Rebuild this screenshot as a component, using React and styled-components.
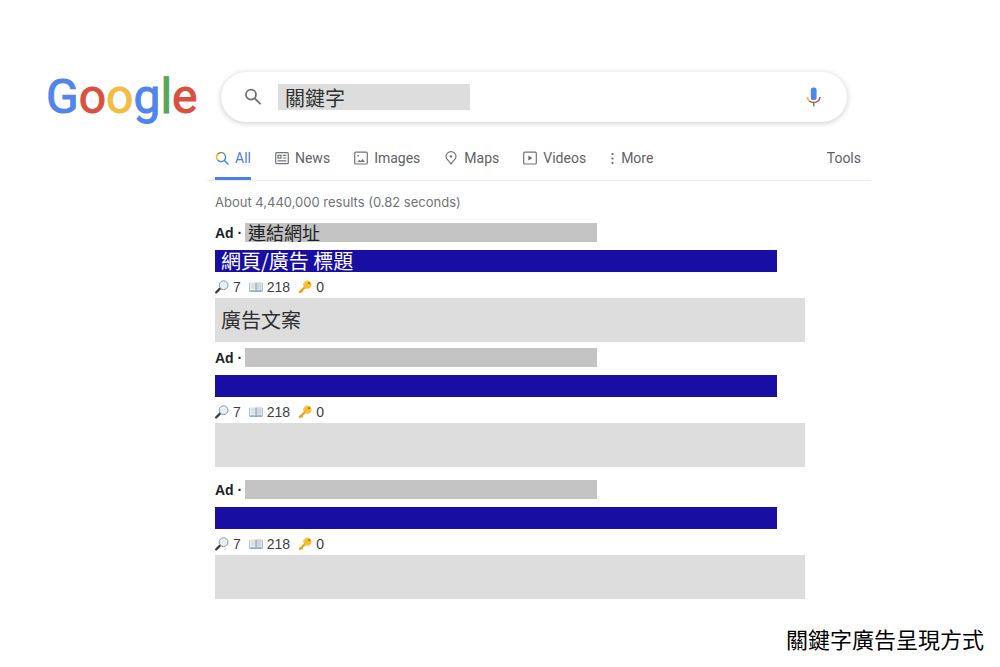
import React from "react";
import styled, { createGlobalStyle } from "styled-components";
import { useState } from "react";

const tabs = [
  { name: "All", icon: "all", active: true },
  { name: "News", icon: "news" },
  { name: "Images", icon: "images" },
  { name: "Maps", icon: "maps" },
  { name: "Videos", icon: "videos" },
  { name: "More", icon: "more" },
];

const ads = [
  { id: 1, link: "連結網址", title: "網頁/廣告 標題", text: "廣告文案" },
  { id: 2, gap: "6px" },
  { id: 3, gap: "13px" },
];

const TabIcon = ({ name }) => {
  if (name === "more") {
    return (
      <svg width="5" height="14" viewBox="0 0 5 14" fill="#5f6368">
        <circle cx="2.5" cy="3" r="1.1" />
        <circle cx="2.5" cy="7.5" r="1.1" />
        <circle cx="2.5" cy="12" r="1.1" />
      </svg>
    );
  }
  return (
    <svg width="14" height="14" viewBox="0 0 14 14" fill="none" stroke="#70757a" strokeWidth="1.2">
      {name === "all" && (
        <g strokeWidth="1.4">
          <path d="M2.4 8.6A4.4 4.4 0 0 1 2.6 3.2" stroke="#fbbc04" />
          <path d="M2.6 3.2A4.4 4.4 0 0 1 6.1 1.6" stroke="#ea4335" />
          <path d="M6.1 1.6A4.4 4.4 0 0 1 10.5 6" stroke="#34a853" />
          <path d="M10.5 6A4.4 4.4 0 0 1 2.4 8.6M9.2 9.2L13.4 13.4" stroke="#4285f4" />
        </g>
      )}
      {name === "news" && (
        <>
          <rect x="0.7" y="1.7" width="12.6" height="11" rx="1" />
          <rect x="3" y="4.3" width="3" height="2.8" />
          <path d="M7.8 4.4H11.4M7.8 7H11.4M2.6 9.9H11.4" />
        </>
      )}
      {name === "images" && (
        <>
          <rect x="0.7" y="1.2" width="12.6" height="11.8" rx="1" />
          <circle cx="4.2" cy="4.6" r="0.9" fill="#70757a" stroke="none" />
          <path d="M3.4 11L5.4 8.7L6.8 10.1L8.6 7.9L11 11Z" fill="#70757a" stroke="none" />
        </>
      )}
      {name === "maps" && (
        <>
          <path d="M7 13.3C6.4 10.6 2 9 2 5.4a5 4.7 0 0 1 10 0C12 9 7.6 10.6 7 13.3Z" />
          <circle cx="7" cy="5.4" r="1.2" fill="#70757a" stroke="none" />
        </>
      )}
      {name === "videos" && (
        <>
          <rect x="0.7" y="1.2" width="12.6" height="11.8" rx="1" />
          <path d="M5.4 4.7V9.6L9.3 7.1Z" fill="#5f6368" stroke="none" />
        </>
      )}
    </svg>
  );
};

const SearchIcon = () => (
  <svg width="18" height="18" viewBox="0 0 18 18" fill="none" stroke="#6b7075" strokeWidth="1.8">
    <circle cx="7" cy="6.6" r="5" />
    <path d="M10.7 10.3L16.6 16.2" />
  </svg>
);

const MicIcon = () => (
  <svg width="16" height="20" viewBox="0 0 16 20" fill="none" strokeWidth="1.6">
    <rect x="4.8" y="0.4" width="5.8" height="12.6" rx="2.6" fill="#4f86ec" />
    <path d="M1.4 10C1.6 11.8 2.2 13 3.3 14" stroke="#f2b632" />
    <path d="M3.3 14C5.6 16 9.8 16 12.1 14C13.2 13 13.8 11.8 14 10" stroke="#df4a3c" />
    <path d="M7.7 15.6V19.4" stroke="#3f9d55" />
  </svg>
);

const LensIcon = () => (
  <svg width="14" height="14" viewBox="0 0 14 14">
    <path d="M5.2 8.4L1.2 12.4" stroke="#3b3f44" strokeWidth="2.2" strokeLinecap="round" />
    <circle cx="8.6" cy="5.2" r="4.4" fill="#e3f0f7" stroke="#8d979e" strokeWidth="1" />
    <path d="M6.4 4.4A2.6 2.6 0 0 1 8.8 2.6" fill="none" stroke="#fff" />
  </svg>
);

const BookIcon = () => (
  <svg width="14" height="14" viewBox="0 0 14 14">
    <path d="M0.4 2.8H13.6V11.8H0.4Z" fill="#7ba3bd" />
    <path d="M1 2.2C3 1.6 5.6 1.8 7 2.8V11C5.6 10.2 3 10.2 1 10.8Z" fill="#eef1f3" />
    <path d="M13 2.2C11 1.6 8.4 1.8 7 2.8V11C8.4 10.2 11 10.2 13 10.8Z" fill="#dce2e6" />
    <path d="M2.2 4H5.8M2.2 6H5.8M2.2 8H5.8M8.2 4H11.8M8.2 6H11.8M8.2 8H11.8" stroke="#b4bec5" strokeWidth="0.7" />
    <path d="M7 2.8V11.6" stroke="#72818b" strokeWidth="0.9" />
  </svg>
);

const KeyIcon = () => (
  <svg width="14" height="14" viewBox="0 0 14 14">
    <path d="M7.6 6.6L1.2 12.6M3.2 10.7L4.6 12" stroke="#e5a51c" strokeWidth="2.2" />
    <circle cx="9.4" cy="4.6" r="4.2" fill="#f5bf2f" />
    <path d="M6.2 3.8A3.4 3.4 0 0 1 9.4 1.2" fill="none" stroke="#fbdc74" />
    <circle cx="11" cy="3.2" r="0.9" fill="#8f651a" />
  </svg>
);

const Ad = ({ ad }) => (
  <StyledAd $gap={ad.gap}>
    <AdRow>
      <AdLabel>Ad ·</AdLabel>
      <AdLink>{ad.link}</AdLink>
    </AdRow>
    <AdTitle href="#">{ad.title}</AdTitle>
    <Stats>
      <Stat><LensIcon />7</Stat>
      <Stat><BookIcon />218</Stat>
      <Stat><KeyIcon />0</Stat>
    </Stats>
    <AdText>{ad.text}</AdText>
  </StyledAd>
);

const App = () => {
  const [keyword, setKeyword] = useState("關鍵字");

  return (
    <Page>
      <GlobalStyle />
      <Header>
        <Logo href="#" aria-label="Google">
          <Letter $color="#5086ec">G</Letter>
          <Letter $color="#d95040">o</Letter>
          <Letter $color="#f2bd42">o</Letter>
          <Letter $color="#5086ec">g</Letter>
          <Letter $color="#58a55c">l</Letter>
          <Letter $color="#d95040">e</Letter>
        </Logo>
        <SearchBar onSubmit={(e) => e.preventDefault()}>
          <IconButton type="submit" aria-label="Search">
            <SearchIcon />
          </IconButton>
          <SearchInput
            type="text"
            aria-label="Keyword"
            value={keyword}
            onChange={(e) => setKeyword(e.target.value)}
          />
          <IconButton type="button" aria-label="Voice" $end>
            <MicIcon />
          </IconButton>
        </SearchBar>
      </Header>

      <TabBar>
        {tabs.map((tab) => (
          <Tab key={tab.name} href="#" $active={tab.active}>
            <TabIcon name={tab.icon} />
            {tab.name}
          </Tab>
        ))}
        <ToolsButton type="button">Tools</ToolsButton>
      </TabBar>

      <Results>
        <ResultCount>About 4,440,000 results (0.82 seconds)</ResultCount>
        {ads.map((ad) => (
          <Ad key={ad.id} ad={ad} />
        ))}
      </Results>

      <Caption>關鍵字廣告呈現方式</Caption>
    </Page>
  );
};

const GlobalStyle = createGlobalStyle`
  * {
    box-sizing: border-box;
  }
  body {
    margin: 0;
    background: #ffffff;
    font-family: "Liberation Sans", "Noto Sans CJK TC", sans-serif;
    color: #202124;
  }
  svg {
    display: block;
    flex-shrink: 0;
  }
`;

const Page = styled.div`
  padding-top: 72px;
`;

const Header = styled.header`
  display: grid;
  grid-template-columns: 175px minmax(0, 626px);
  padding: 0 46px;
`;

const Logo = styled.a`
  display: flex;
  font-family: Roboto, sans-serif;
  font-size: 48px;
  line-height: 50px;
  text-decoration: none;
`;

const Letter = styled.span`
  color: ${(props) => props.$color};
  -webkit-text-stroke: 1px ${(props) => props.$color};
`;

const SearchBar = styled.form`
  display: flex;
  align-items: center;
  height: 50px;
  padding: 0 25px 0 23px;
  border-radius: 25px;
  box-shadow: 0 1px 5px 1px rgba(32, 33, 36, 0.18);
`;

const IconButton = styled.button`
  display: flex;
  padding: 0;
  border: none;
  background: none;
  cursor: pointer;
  margin-left: ${(props) => (props.$end ? "auto" : "0")};
`;

const SearchInput = styled.input`
  width: 192px;
  height: 26px;
  margin-left: 16px;
  padding: 0 7px;
  border: none;
  outline: none;
  background: #dddddd;
  color: #303030;
  font-family: "Noto Sans CJK TC", sans-serif;
  font-size: 20px;
`;

const TabBar = styled.nav`
  display: flex;
  gap: 24px;
  max-width: 664px;
  height: 45px;
  margin: 14px 0 0 207px;
  padding: 0 10px 0 8px;
  border-bottom: 1px solid #ebebeb;
`;

const Tab = styled.a`
  display: flex;
  align-items: center;
  gap: 6px;
  padding-top: 3px;
  border-bottom: 3px solid ${(props) => (props.$active ? "#4a80e8" : "transparent")};
  color: ${(props) => (props.$active ? "#4a80e8" : "#5f6368")};
  font-family: Roboto, sans-serif;
  font-size: 14px;
  text-decoration: none;
`;

const ToolsButton = styled.button`
  margin-left: auto;
  padding: 0;
  border: none;
  background: none;
  color: #5f6368;
  font-family: Roboto, sans-serif;
  font-size: 14px;
  cursor: pointer;
`;

const Results = styled.main`
  max-width: 805px;
  padding-left: 215px;
`;

const ResultCount = styled.p`
  margin: 0;
  padding: 13px 0;
  color: #70757a;
  font-family: Inter, sans-serif;
  font-size: 13px;
  line-height: 16px;
`;

const StyledAd = styled.section`
  margin-top: ${(props) => props.$gap || "0"};
`;

const AdRow = styled.div`
  display: flex;
  align-items: center;
`;

const AdLabel = styled.span`
  width: 30px;
  font-size: 14px;
  font-weight: bold;
  white-space: nowrap;
`;

const AdLink = styled.div`
  width: 352px;
  height: 19px;
  padding-left: 3px;
  background: #c3c3c3;
  font-size: 18px;
  line-height: 22px;
`;

const AdTitle = styled.a`
  display: block;
  width: 562px;
  max-width: 100%;
  height: 22px;
  margin-top: 8px;
  padding-left: 6px;
  background: #180ea4;
  color: #ffffff;
  font-family: "Noto Sans CJK TC", sans-serif;
  font-size: 20px;
  line-height: 22px;
  text-decoration: none;
`;

const Stats = styled.div`
  display: flex;
  gap: 8px;
  height: 26px;
  align-items: center;
  padding-top: 4px;
`;

const Stat = styled.span`
  display: flex;
  align-items: center;
  gap: 4px;
  color: #3c4043;
  font-size: 14px;
`;

const AdText = styled.div`
  height: 44px;
  padding-left: 6px;
  background: #dddddd;
  color: #303030;
  font-size: 20px;
  line-height: 46px;
`;

const Caption = styled.p`
  margin: 27px 16px 0;
  color: #000000;
  font-size: 22px;
  line-height: 30px;
  text-align: right;
`;

export default App;
